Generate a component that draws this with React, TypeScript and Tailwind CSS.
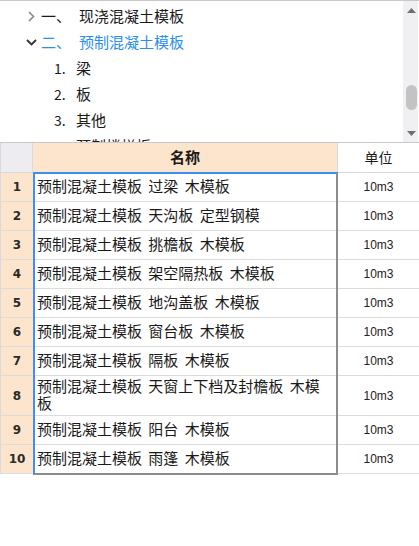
import React from "react";

const FONT = { fontFamily: '"Noto Sans CJK SC", "Noto Sans", sans-serif' };

type TreeItem = { num: string; label: string; level: 0 | 1; open?: boolean; active?: boolean };

const TREE: TreeItem[] = [
  { num: "一、", label: "现浇混凝土模板", level: 0, open: false },
  { num: "二、", label: "预制混凝土模板", level: 0, open: true, active: true },
  { num: "1.", label: "梁", level: 1 },
  { num: "2.", label: "板", level: 1 },
  { num: "3.", label: "其他", level: 1 },
  { num: "4.", label: "预制楼梯板", level: 1 },
];

const ROWS: { name: string; unit: string; tall?: boolean }[] = [
  { name: "预制混凝土模板 过梁 木模板", unit: "10m3" },
  { name: "预制混凝土模板 天沟板 定型钢模", unit: "10m3" },
  { name: "预制混凝土模板 挑檐板 木模板", unit: "10m3" },
  { name: "预制混凝土模板 架空隔热板 木模板", unit: "10m3" },
  { name: "预制混凝土模板 地沟盖板 木模板", unit: "10m3" },
  { name: "预制混凝土模板 窗台板 木模板", unit: "10m3" },
  { name: "预制混凝土模板 隔板 木模板", unit: "10m3" },
  { name: "预制混凝土模板 天窗上下档及封檐板 木模板", unit: "10m3", tall: true },
  { name: "预制混凝土模板 阳台 木模板", unit: "10m3" },
  { name: "预制混凝土模板 雨篷 木模板", unit: "10m3" },
];

function Chevron({ open }: { open?: boolean }) {
  return (
    <span className="flex w-[12px] h-[12px] items-center justify-center">
      {open ? (
        <svg width="11" height="7" viewBox="0 0 11 7">
          <path d="M1 1 L5.5 5.5 L10 1" fill="none" stroke="#333" strokeWidth="1.8" />
        </svg>
      ) : (
        <svg width="7" height="11" viewBox="0 0 7 11">
          <path d="M1 1 L5.5 5.5 L1 10" fill="none" stroke="#8a8a8a" strokeWidth="1.6" />
        </svg>
      )}
    </span>
  );
}

function Tree() {
  return (
    <div className="flex h-[143px] border-t border-b border-[#c9c9c9] bg-white">
      <div className="flex-1 overflow-hidden pt-[2px]">
        {TREE.map((t, i) =>
          t.level === 0 ? (
            <div
              key={i}
              className={`flex h-[26px] items-center pl-[25px] text-[15px] leading-[18px] ${
                t.active ? "text-[#2a8ff0]" : "text-[#1a1a1a]"
              }`}
            >
              <Chevron open={t.open} />
              <span className="ml-[4px]">{t.num}</span>
              <span className="ml-[8px]">{t.label}</span>
            </div>
          ) : (
            <div key={i} className="flex h-[26px] items-center pl-[54px] text-[15px] leading-[18px] text-[#1a1a1a]">
              <span className="w-[22px] text-[14px]">{t.num}</span>
              <span>{t.label}</span>
            </div>
          )
        )}
      </div>
      <div className="flex w-[15px] flex-col bg-[#f0eff2] mr-[1px]">
        <div className="flex h-[18px] items-center justify-center pl-[2px]">
          <svg width="9" height="5" viewBox="0 0 9 5">
            <polygon points="0,5 4.5,0 9,5" fill="#6f6f6f" />
          </svg>
        </div>
        <div className="flex-1 pl-[3px] pt-[66px]">
          <div className="h-[25px] w-[11px] rounded-full bg-[#c3c3c3]" />
        </div>
        <div className="flex h-[18px] items-center justify-center pl-[2px]">
          <svg width="9" height="5" viewBox="0 0 9 5">
            <polygon points="0,0 4.5,5 9,0" fill="#6f6f6f" />
          </svg>
        </div>
      </div>
    </div>
  );
}

function Table() {
  return (
    <div>
      <div className="grid h-[30px] grid-cols-[33px_305px_1fr] border-b border-[#d9d9d9]">
        <div className="border-r border-l border-[#d9d9d9] bg-[#edecf0]" />
        <div className="flex items-center justify-center border-r border-[#d9d9d9] bg-[#fde5cd] text-[15px] font-bold text-[#1a1a1a]">
          名称
        </div>
        <div className="flex items-center justify-center bg-white text-[14px] text-[#1a1a1a]">单位</div>
      </div>
      <div className="relative">
        {ROWS.map((r, i) => (
          <div
            key={i}
            className={`grid grid-cols-[33px_305px_1fr] border-b border-[#dcdcdc] ${r.tall ? "h-[40px]" : "h-[29px]"}`}
          >
            <div
              className="flex items-center justify-center border-l border-[#d9d9d9] bg-[#fde5cd] text-[12px] font-bold text-[#2a2a2a]"
              style={{ fontFamily: '"DejaVu Sans", sans-serif' }}
            >
              {i + 1}
            </div>
            <div className="flex items-center pl-[4px] pr-[4px] pb-[3px] text-[15px] leading-[17px] text-[#1a1a1a] [word-spacing:3px]">
              {r.name}
            </div>
            <div
              className="flex items-center justify-center text-[12px] text-[#222]"
              style={{ fontFamily: '"Liberation Sans", sans-serif' }}
            >
              {r.unit}
            </div>
          </div>
        ))}
        <div className="pointer-events-none absolute left-[33px] top-[-1px] bottom-[-1px] w-[305px] border-l-2 border-t-2 border-r-2 border-b-2 border-l-[#3d8ef5] border-t-[#3d8ef5] border-r-[#8c8c8c] border-b-[#8c8c8c]" />
      </div>
    </div>
  );
}

export default function App() {
  return (
    <div className="h-[546px] w-[419px] overflow-hidden bg-white" style={FONT}>
      <Tree />
      <Table />
    </div>
  );
}
